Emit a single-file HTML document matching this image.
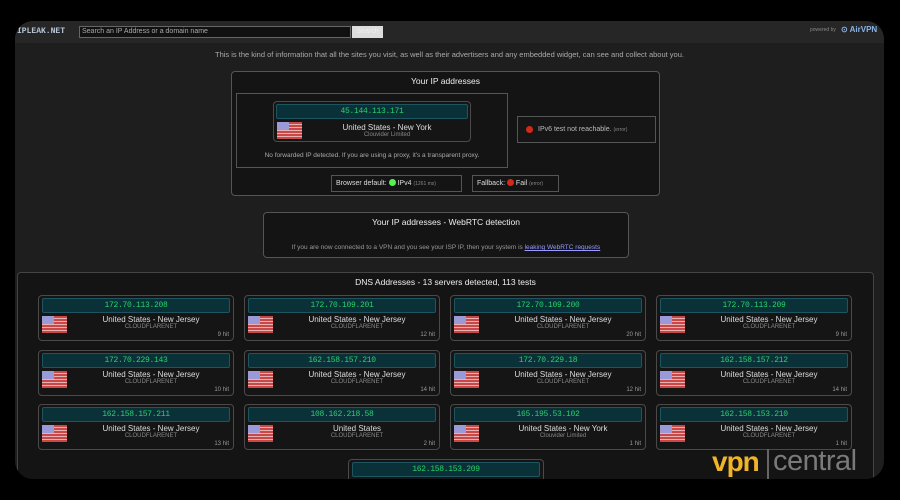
<!DOCTYPE html>
<html><head><meta charset="utf-8"><style>
*{box-sizing:border-box;margin:0;padding:0}
html,body{width:900px;height:500px;overflow:hidden}
body{background:#000;font-family:"Liberation Sans",sans-serif;color:#ddd;position:relative}
.panel{position:absolute;left:15px;top:21px;width:869px;height:458px;background:#1e1e1e;border-radius:18px;overflow:hidden}
.hdr{position:absolute;left:0;top:0;width:869px;height:22px;background:#262626}
.abs{position:absolute}
.box{position:absolute;border:1px solid #555;border-radius:4px;background:#141414}
.card{position:absolute;border:1px solid #4a4a4a;border-radius:4px;background:#151515;width:196px;height:46px}
.bar{position:absolute;left:3px;top:2px;right:3px;height:15px;background:#0a3038;border:1px solid #1d5560;border-radius:2px;color:#27d36a;font-size:8px;text-align:center;line-height:13px;letter-spacing:-0.3px;font-family:"Liberation Mono",monospace}
.flag{position:absolute;left:3px;top:20px;width:25px;height:17px;background:repeating-linear-gradient(#c84848 0 2px,#e8b0b0 2px 3px)}
.flag:before{content:"";position:absolute;left:0;top:0;width:12px;height:8px;background:#9a9ad8}
.loc{position:absolute;left:30px;right:0;top:19px;text-align:center;font-size:8px;color:#ddd}
.isp{position:absolute;left:30px;right:0;top:28px;text-align:center;font-size:6px;color:#888}
.hit{position:absolute;right:4px;bottom:2px;font-size:6px;color:#999}
</style></head><body>
<div class="panel">
<div class="hdr">
<div class="abs" style="left:2px;top:6px;font-size:8px;font-weight:bold;color:#b8c8d8;font-family:'Liberation Mono',monospace">IPLEAK.NET</div>
<div class="abs" style="left:64px;top:5px;width:272px;height:12px;background:#111;border:1px solid #666;font-size:7px;color:#aaa;padding-left:2px;line-height:10px">Search an IP Address or a domain name</div>
<div class="abs" style="left:337px;top:5px;width:31px;height:12px;background:#ddd;font-size:7px;color:#eee;text-align:center;line-height:12px">Search</div>
<div class="abs" style="left:795px;top:6px;font-size:5px;color:#888">powered by</div>
<div class="abs" style="left:826px;top:4px;font-size:8px;font-weight:bold;color:#8ab4e8">⊙ AirVPN</div>
</div>
<div class="abs" style="left:0;width:869px;top:29px;text-align:center;font-size:7.5px;color:#aaa">This is the kind of information that all the sites you visit, as well as their advertisers and any embedded widget, can see and collect about you.</div>

<div class="box" style="left:216px;top:50px;width:429px;height:125px"></div>
<div class="abs" style="left:216px;width:429px;top:55px;text-align:center;font-size:8.5px;color:#eee">Your IP addresses</div>
<div class="box" style="left:221px;top:72px;width:272px;height:75px;border-radius:0"></div>
<div class="card" style="left:258px;top:80px;width:198px;height:41px"><div class="bar" style="left:2px;right:2px">45.144.113.171</div><div class="flag"></div><div class="loc" style="top:21px">United States - New York</div><div class="isp" style="top:30px">Clouvider Limited</div></div>
<div class="abs" style="left:221px;width:272px;top:131px;text-align:center;font-size:6.5px;color:#aaa">No forwarded IP detected. If you are using a proxy, it's a transparent proxy.</div>
<div class="box" style="left:502px;top:95px;width:139px;height:27px;border-radius:0;background:#161616"></div>
<div class="abs" style="left:511px;top:105px;width:7px;height:7px;border-radius:50%;background:#d02a1a"></div>
<div class="abs" style="left:523px;top:105px;font-size:7px;color:#bbb">IPv6 test not reachable. <span style="font-size:5px;color:#888">(error)</span></div>
<div class="box" style="left:316px;top:154px;width:131px;height:17px;border-radius:0"></div>
<div class="abs" style="left:321px;top:158px;font-size:7px;color:#ddd">Browser default: <span style="display:inline-block;width:7px;height:7px;border-radius:50%;background:#5e5;vertical-align:-1px"></span> IPv4 <span style="font-size:5px;color:#888">(1261 ms)</span></div>
<div class="box" style="left:457px;top:154px;width:87px;height:17px;border-radius:0"></div>
<div class="abs" style="left:462px;top:158px;font-size:7px;color:#ddd">Fallback: <span style="display:inline-block;width:7px;height:7px;border-radius:50%;background:#d02a1a;vertical-align:-1px"></span> Fail <span style="font-size:5px;color:#888">(error)</span></div>

<div class="box" style="left:248px;top:191px;width:366px;height:46px"></div>
<div class="abs" style="left:248px;width:366px;top:196px;text-align:center;font-size:8.5px;color:#eee">Your IP addresses - WebRTC detection</div>
<div class="abs" style="left:248px;width:366px;top:223px;text-align:center;font-size:6.5px;color:#999">If you are now connected to a VPN and you see your ISP IP, then your system is <span style="color:#9a9aff;text-decoration:underline">leaking WebRTC requests</span></div>

<div class="box" style="left:2px;top:251px;width:857px;height:240px;border-color:#444"></div>
<div class="abs" style="left:2px;width:857px;top:256px;text-align:center;font-size:8.5px;color:#eee">DNS Addresses - 13 servers detected, 113 tests</div>

<div class="card" style="left:23px;top:274px"><div class="bar">172.70.113.208</div><div class="flag"></div><div class="loc">United States - New Jersey</div><div class="isp">CLOUDFLARENET</div><div class="hit">9 hit</div></div>
<div class="card" style="left:229px;top:274px"><div class="bar">172.70.109.201</div><div class="flag"></div><div class="loc">United States - New Jersey</div><div class="isp">CLOUDFLARENET</div><div class="hit">12 hit</div></div>
<div class="card" style="left:435px;top:274px"><div class="bar">172.70.109.200</div><div class="flag"></div><div class="loc">United States - New Jersey</div><div class="isp">CLOUDFLARENET</div><div class="hit">20 hit</div></div>
<div class="card" style="left:641px;top:274px"><div class="bar">172.70.113.209</div><div class="flag"></div><div class="loc">United States - New Jersey</div><div class="isp">CLOUDFLARENET</div><div class="hit">9 hit</div></div>

<div class="card" style="left:23px;top:329px"><div class="bar">172.70.229.143</div><div class="flag"></div><div class="loc">United States - New Jersey</div><div class="isp">CLOUDFLARENET</div><div class="hit">10 hit</div></div>
<div class="card" style="left:229px;top:329px"><div class="bar">162.158.157.210</div><div class="flag"></div><div class="loc">United States - New Jersey</div><div class="isp">CLOUDFLARENET</div><div class="hit">14 hit</div></div>
<div class="card" style="left:435px;top:329px"><div class="bar">172.70.229.18</div><div class="flag"></div><div class="loc">United States - New Jersey</div><div class="isp">CLOUDFLARENET</div><div class="hit">12 hit</div></div>
<div class="card" style="left:641px;top:329px"><div class="bar">162.158.157.212</div><div class="flag"></div><div class="loc">United States - New Jersey</div><div class="isp">CLOUDFLARENET</div><div class="hit">14 hit</div></div>

<div class="card" style="left:23px;top:383px"><div class="bar">162.158.157.211</div><div class="flag"></div><div class="loc">United States - New Jersey</div><div class="isp">CLOUDFLARENET</div><div class="hit">13 hit</div></div>
<div class="card" style="left:229px;top:383px"><div class="bar">108.162.218.58</div><div class="flag"></div><div class="loc">United States</div><div class="isp">CLOUDFLARENET</div><div class="hit">2 hit</div></div>
<div class="card" style="left:435px;top:383px"><div class="bar">165.195.53.102</div><div class="flag"></div><div class="loc">United States - New York</div><div class="isp">Clouvider Limited</div><div class="hit">1 hit</div></div>
<div class="card" style="left:641px;top:383px"><div class="bar">162.158.153.210</div><div class="flag"></div><div class="loc">United States - New Jersey</div><div class="isp">CLOUDFLARENET</div><div class="hit">1 hit</div></div>

<div class="card" style="left:333px;top:438px"><div class="bar">162.158.153.209</div></div>

<div class="abs" style="left:697px;top:425px;font-size:28px;font-weight:bold;color:#f0b428;letter-spacing:-1px">vpn</div>
<div class="abs" style="left:752px;top:428px;width:2px;height:30px;background:#666"></div>
<div class="abs" style="left:758px;top:424px;font-size:29px;color:#7a7a7a;letter-spacing:-0.5px">central</div>
</div>
</body></html>
